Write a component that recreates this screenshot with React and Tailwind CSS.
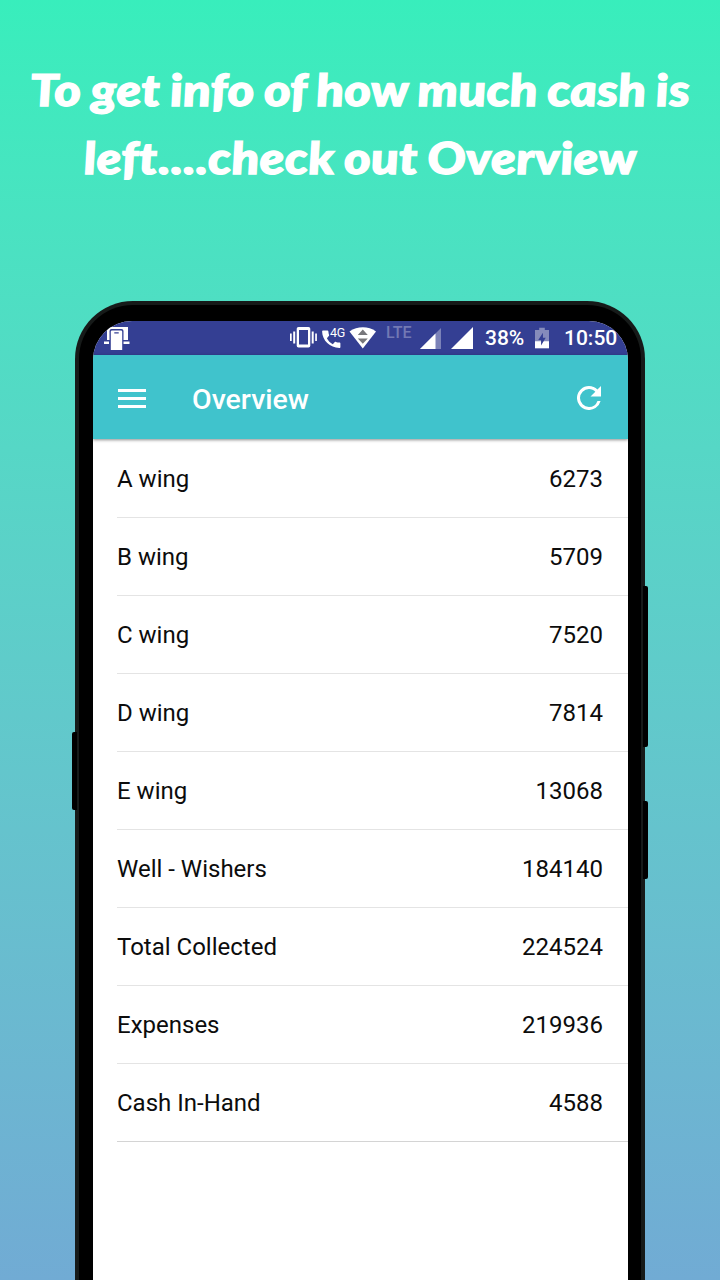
const rows = [
  ["A wing", "6273"],
  ["B wing", "5709"],
  ["C wing", "7520"],
  ["D wing", "7814"],
  ["E wing", "13068"],
  ["Well - Wishers", "184140"],
  ["Total Collected", "224524"],
  ["Expenses", "219936"],
  ["Cash In-Hand", "4588"],
];

function StatusBar() {
  return (
    <div className="flex h-[34px] shrink-0 items-start bg-[#343f93] pl-[11px] text-white">
      <svg className="mt-[5px] h-[25px] w-[27px] shrink-0" viewBox="0 0 27 25" fill="currentColor">
        <path d="M3 1h21v13h-4.500V5a2 2 0 0 0-2-2h-10a2 2 0 0 0-2 2v9H3zM0 15.500h5V18H0zM19.500 15.500h6V18h-6z" />
        <path d="M8 4.500h9a1.200 1.200 0 0 1 1.200 1.200V24H6.800V5.700A1.200 1.200 0 0 1 8 4.500z" />
        <path d="M10.300 6.800h4.400" stroke="#343f93" strokeWidth="1.200" />
      </svg>
      <svg className="ml-[159px] mt-[5px] h-[23px] w-[28px] shrink-0" viewBox="0 0 28 23" fill="currentColor">
        <path fillRule="evenodd" d="M8.500 1h10A1.800 1.800 0 0 1 20.300 2.800v17a1.800 1.800 0 0 1-1.800 1.800h-10a1.800 1.800 0 0 1-1.800-1.800v-17A1.800 1.800 0 0 1 8.500 1zM9 4v14.500h9V4z" />
        <path d="M0 7.500h1.700v7.500H0zM3.200 5.500h2v12h-2zM21.700 5.500h2v12h-2zM25.200 7.500h1.700v7.500h-1.700z" />
      </svg>
      <div className="relative ml-[4px] h-[30px] w-[24px] shrink-0">
        <svg className="mt-[8px] h-[21px] w-[20px]" viewBox="0 0 20 21" fill="currentColor">
          <path d="M1 1.500h4.400c.6 0 .9.300 1 .9.100 1.300.3 2.500.7 3.600.1.400 0 .8-.3 1.100L4.900 9.300c1.300 2.600 3.300 4.600 5.900 5.900l2-2.100c.3-.3.700-.4 1.100-.2 1.100.4 2.300.6 3.500.6.600 0 1 .4 1 1v3.400c0 .6-.4 1-1 1C8 18.900.3 11.500.1 2.500c0-.6.300-1 .9-1z" />
        </svg>
        <span className="absolute left-[8px] top-[5px] text-[12.500px] leading-[14px] tracking-[-0.3px]">4G</span>
      </div>
      <svg className="ml-[3px] mt-[6px] h-[22px] w-[28px] shrink-0" viewBox="0 0 27 22" fill="currentColor">
        <path d="M0 4.500C8-1.100 18.800-1.100 26.500 4.500L13.300 21.500z" />
        <path d="M13.300 2.500l5 5.500h-10zM8.300 11.500h10l-5 5.200z" fill="#77777b" />
      </svg>
      <span className="ml-[9px] mt-[3px] w-[28px] shrink-0 text-[16px] font-medium leading-[18px] text-[#7279b4]">LTE</span>
      <svg className="ml-[6px] mt-[7px] h-[21px] w-[21px] shrink-0" viewBox="0 0 21 21">
        <path d="M21 0v21H0z" fill="#7b82b8" />
        <path d="M15.500 5.500V21H0z" fill="white" />
      </svg>
      <svg className="ml-[10px] mt-[6px] h-[22px] w-[22px] shrink-0" viewBox="0 0 22 22" fill="currentColor">
        <path d="M22 0v22H0z" />
      </svg>
      <span className="ml-[12px] mt-[5px] w-[40px] shrink-0 text-[21px] font-medium leading-[24px]">38%</span>
      <svg className="ml-[10px] mt-[6px] h-[22px] w-[14px] shrink-0" viewBox="0 0 15 22">
        <path d="M4.500 0h6v2.500H15V22H0V2.500h4.500z" fill="#858bbb" />
        <path d="M0 14.500h15V22H0z" fill="white" />
        <path d="M8.500 5.500v5.200h3L6.500 19v-5.800h-3z" fill="#343f93" />
      </svg>
      <span className="ml-[15px] mt-[5px] shrink-0 text-[21px] font-medium leading-[24px]">10:50</span>
    </div>
  );
}

function AppBar() {
  return (
    <header className="relative z-10 flex h-[84px] shrink-0 items-center bg-[#40c3cc] pl-[25px] pr-[27px] text-white shadow-[0_1px_3px_rgba(0,0,0,0.45)]">
      <div className="mt-[3px] flex w-[28px] flex-col gap-[5px]">
        <span className="h-[3px] bg-white" />
        <span className="h-[3px] bg-white" />
        <span className="h-[3px] bg-white" />
      </div>
      <h2 className="ml-[46px] mt-[5px] text-[28.500px] font-medium leading-8">Overview</h2>
      <svg className="ml-auto mt-px h-[24px] w-[24px]" viewBox="4 4 16 16" fill="currentColor">
        <path d="M17.650 6.350A7.958 7.958 0 0 0 12 4a8 8 0 1 0 7.730 10h-2.080A5.990 5.990 0 0 1 12 18a6 6 0 1 1 0-12c1.660 0 3.140.690 4.220 1.780L13 11h7V4z" />
      </svg>
    </header>
  );
}

export default function App() {
  return (
    <main className="flex h-[1280px] w-[720px] flex-col items-center overflow-hidden bg-linear-to-b from-[#38eebc] to-[#71abd4] font-['Roboto',sans-serif]">
      <h1 className="h-[301px] w-full shrink-0 scale-x-[1.155] whitespace-nowrap pt-[55px] text-center font-['Lato',sans-serif] text-[44px] font-black italic leading-[68px] tracking-[0.3px] text-white [-webkit-text-stroke:1.3px_white] [word-spacing:-1.5px]">
        <span className="block skew-x-[4deg]">To get info of how much cash is</span>
        <span className="block skew-x-[4deg]">left....check out Overview</span>
      </h1>
      <section className="relative h-[979px] w-[570px] shrink-0 rounded-t-[58px] border-x-[4px] border-t-[4px] border-[#161a19] bg-black px-[14px] pt-[16px]">
        <span className="absolute left-[-7px] top-[427px] h-[78px] w-[5px] rounded-l-[2px] bg-black" />
        <span className="absolute right-[-7px] top-[281px] h-[161px] w-[5px] rounded-r-[2px] bg-black" />
        <span className="absolute right-[-7px] top-[496px] h-[78px] w-[5px] rounded-r-[2px] bg-black" />
        <div className="flex h-full w-[535px] flex-col overflow-hidden rounded-t-[39px] bg-white">
          <StatusBar />
          <AppBar />
          <ul className="pl-[24px] pt-px text-[24px] leading-7 text-[#0c0c0c]">
            {rows.map(([name, amount]) => (
              <li key={name} className="flex h-[78px] items-center justify-between border-b border-[#e4e4e4] pr-[25px] last:border-[#d4d4d4]">
                <span>{name}</span>
                <span>{amount}</span>
              </li>
            ))}
          </ul>
        </div>
      </section>
    </main>
  );
}
